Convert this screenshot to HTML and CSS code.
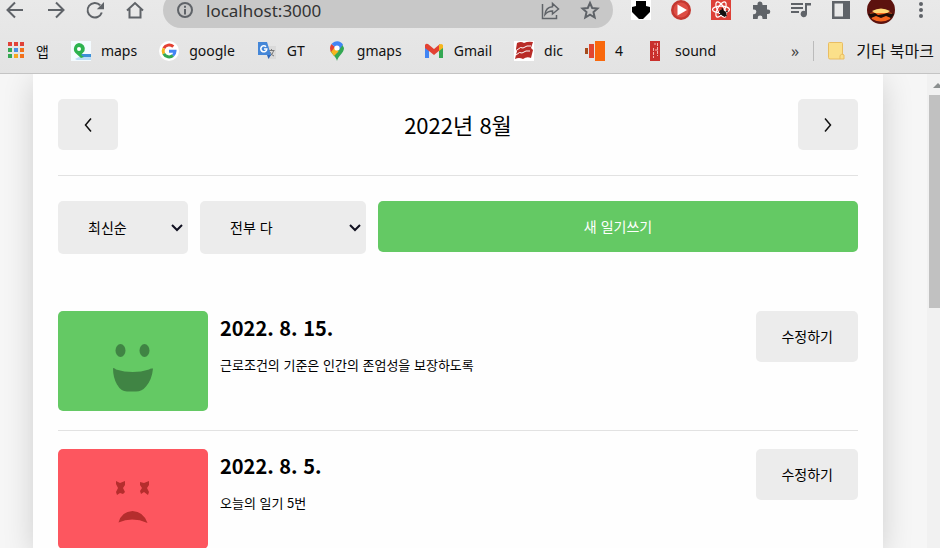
FILE: index.html
```html
<!DOCTYPE html>
<html lang="ko">
<head>
    <meta charset="utf-8">
    <title>감정 일기장</title>
    <meta name="viewport" content="width=device-width, initial-scale=1.0">
    <link rel="stylesheet" href="styles.css">
</head>
<body>
    <header class="browser">
        <div class="toolbar">
            <nav class="tools">
                <button class="tool" aria-label="뒤로"><svg class="icon line" viewBox="0 0 20 20"><path d="M18 10H3M10 2.500L2.500 10l7.500 7.500"/></svg></button>
                <button class="tool" aria-label="앞으로"><svg class="icon line" viewBox="0 0 20 20"><path d="M3 10h15M11 2.500L18.500 10 11 17.500"/></svg></button>
                <button class="tool" aria-label="새로고침"><svg class="icon" viewBox="0 0 20 20"><path class="stroke" d="M16.800 12.500A7.300 7.300 0 1 1 15.200 5.200"/><path d="M19 2v7.200h-7.200z"/></svg></button>
                <button class="tool" aria-label="홈"><svg class="icon line" viewBox="0 0 20 20"><path d="M2 10.500L10 3l8 7.500M4.500 9v8.500h11V9"/></svg></button>
            </nav>
            <div class="address">
                <svg class="icon" viewBox="0 0 20 20"><circle class="stroke" cx="10" cy="10" r="7"/><path d="M9 5.800h2v2H9zM9 9h2v5.500H9z"/></svg>
                <input class="url" type="text" value="localhost:3000" aria-label="주소">
                <div class="tools">
                    <button class="tool" aria-label="공유"><svg class="icon" viewBox="0 0 20 20"><path class="thin" d="M2.500 4v14.500h14V15M5 14.500c.5-5 3-7.500 7.500-7.800V3.500l6 5.500-6 5V11c-3.500 0-5.500 1-7.500 3.500z"/></svg></button>
                    <button class="tool" aria-label="북마크 추가"><svg class="icon" viewBox="0 0 20 20"><path class="stroke" d="M10 3l2.200 5 5.300.5-4 3.600 1.200 5.400-4.700-2.900-4.700 2.900 1.200-5.400-4-3.600L7.800 8z"/></svg></button>
                </div>
            </div>
            <div class="tools">
                <button class="tool" aria-label="다운로드"><svg class="icon" viewBox="0 0 20 20"><path fill="#fff" d="M0 0h20v20H0z"/><path fill="#000" d="M5 1h10v5l4 1v5l-7 7H8l-7-7V7l4-1z"/></svg></button>
                <button class="tool" aria-label="재생"><svg class="icon" viewBox="0 0 20 20"><circle cx="10" cy="10" r="10" fill="#c43830"/><circle cx="10" cy="10" r="7.500" fill="#dd4d44"/><path fill="#fff" d="M6.500 4.500v11L16 10z"/></svg></button>
                <button class="tool" aria-label="React 도구"><svg class="icon" viewBox="0 0 20 20"><path fill="#dd4037" d="M0 0h20v20H0z"/><g fill="none" stroke="#fff" stroke-width="1.200"><ellipse cx="10" cy="9.500" rx="8.500" ry="3.400"/><ellipse cx="10" cy="9.500" rx="8.500" ry="3.400" transform="rotate(60 10 9.500)"/><ellipse cx="10" cy="9.500" rx="8.500" ry="3.400" transform="rotate(120 10 9.500)"/></g><ellipse cx="12" cy="13" rx="2.500" ry="4" fill="#111" transform="rotate(-45 12 13)"/><path stroke="#111" d="M8 12l8 4M11 8l3 9M8 15l9-4"/></svg></button>
                <button class="tool" aria-label="확장 프로그램"><svg class="icon" viewBox="0 0 20 20"><path d="M2 5h4.500V4a2.500 2.500 0 0 1 5 0v1H16v4.500h1a2.300 2.300 0 0 1 0 4.600h-1V19h-4.500v-1a2.300 2.300 0 0 0-4.800 0v1H2v-4.800h1a2.300 2.300 0 0 0 0-4.700H2z"/></svg></button>
                <button class="tool" aria-label="미디어"><svg class="icon" viewBox="0 0 20 20"><path d="M0 3h12v2H0zM0 7h12v2H0zM0 11h8v2H0zM14 3h6v2.500h-4V14a3.200 3.200 0 1 1-2-3z"/></svg></button>
                <button class="tool" aria-label="사이드 패널"><svg class="icon" viewBox="0 0 20 20"><path fill-rule="evenodd" d="M1 1h18v18H1zM3.500 3.500v13H12v-13z"/></svg></button>
                <button class="tool" aria-label="프로필"><svg class="avatar" viewBox="0 0 28 28"><circle cx="14" cy="14" r="14" fill="#5c120e"/><path fill="#f4651f" d="M3 17q11-3 22 0l-2 6q-9 5-18 0z"/><path fill="#ffd877" d="M5 15q9-5 18 0l-3 2H8z"/><path fill="#1b0c08" d="M1 18l7-1 3 2 6-1 3-1 7 1-3 4-5-2-5 2-5-2-5 2z"/></svg></button>
                <button class="tool" aria-label="메뉴"><svg class="icon" viewBox="0 0 20 20"><circle cx="10" cy="4" r="2"/><circle cx="10" cy="10" r="2"/><circle cx="10" cy="16" r="2"/></svg></button>
            </div>
        </div>

        <nav class="bookmarks">
            <a class="bookmark" href="#">
                <svg class="icon" viewBox="0 0 20 20"><path fill="#e04238" d="M2 1h4v4H2zM8 1h4v4H8zM14 1h4v4h-4z"/><path fill="#37a853" d="M2 7h4v4H2zM2 13h4v4H2z"/><path fill="#4a90e2" d="M8 7h4v4H8z"/><path fill="#f2711c" d="M14 7h4v4h-4zM14 13h4v4h-4z"/><path fill="#f6a821" d="M8 13h4v4H8z"/></svg>
                앱
            </a>
            <a class="bookmark" href="#">
                <svg class="icon" viewBox="0 0 20 20"><path fill="#f4fbff" d="M0 0h20v20H0z"/><path fill="#3d8fd8" d="M8 13h12v3H11z"/><path fill="#b9def7" d="M4 18l4-2h12v3H6z"/><path fill="#2cb34f" d="M8 2a6 6 0 0 1 5.500 8L10 14l3 2-3 1-5.500-5A6 6 0 0 1 8 2z"/><circle cx="8" cy="8" r="2" fill="#fff"/></svg>
                maps
            </a>
            <a class="bookmark" href="#">
                <svg class="icon" viewBox="0 0 20 20"><circle cx="10" cy="10" r="10" fill="#fff"/><g fill="none" stroke-width="3"><path stroke="#e34133" d="M4.800 7.300A6 6 0 0 1 14.300 5.700"/><path stroke="#f5b51e" d="M4.800 12.700a6 6 0 0 1 0-5.400"/><path stroke="#33a852" d="M14 14.500a6 6 0 0 1-9.200-1.800"/><path stroke="#4285f4" d="M10 10.300h6a6 6 0 0 1-2 4.200"/></g></svg>
                google
            </a>
            <a class="bookmark" href="#">
                <svg class="icon" viewBox="0 0 20 20"><path fill="#dadada" d="M8 5h11v13H11z"/><path fill="none" stroke="#777" d="M11.500 9.500h6M14.500 8v1.500M16.500 10q-1 4-4 5M13 11q1 3 4 4"/><path fill="#4587d8" d="M1 1h9l4 13H1z"/><path fill="#2c67bd" d="M10 14h4l-2.500 4z"/><path fill="none" stroke="#fff" stroke-width="1.500" d="M9 5.800a3 3 0 1 0 .8 2.200H7"/></svg>
                GT
            </a>
            <a class="bookmark" href="#">
                <svg class="icon" viewBox="0 0 20 20"><path fill="#34a853" d="M3.500 10C5 14 9 15 10 20c1-5 7-8 7-13l-1.500-3z"/><path fill="#f6b51e" d="M3.500 10l4-3.500 4 4L7 15z"/><path fill="#e34133" d="M3 7q0-2 1.500-4L8 6l-4 5q-1-2-1-4z"/><path fill="#4285f4" d="M4.500 3A7 7 0 0 1 16 3.500L12 9 8 6z"/><circle cx="10" cy="7" r="2.600" fill="#fff"/></svg>
                gmaps
            </a>
            <a class="bookmark" href="#">
                <svg class="icon" viewBox="0 0 20 20"><path fill="#4285f4" d="M1 5l4 3v9H1z"/><path fill="#34a853" d="M15 8l4-3v12h-4z"/><path fill="#e34133" d="M1 4q1-2 3-1l6 5 6-5v6l-6 5-5-4-4-3z"/><path fill="#f5b51e" d="M15 4q2-2 4 0v3l-4 3z"/></svg>
                Gmail
            </a>
            <a class="bookmark" href="#">
                <svg class="icon" viewBox="0 0 20 20"><path fill="#fff" d="M0 0h20v20H0z"/><path fill="#b92b27" d="M3 2q4-2 7 0 4-2 9-1l-2 6 2 2-2 8q-4-2-8 1-4-2-8 0l2-8-1-2z"/><path fill="none" stroke="#fff" d="M3 9q4-4 6-2 4-3 8-2M2 14q4-4 6-2 4-3 8-2"/></svg>
                dic
            </a>
            <a class="bookmark" href="#">
                <svg class="icon" viewBox="0 0 20 20"><path fill="#a44c1d" d="M0 7h3v6H0z"/><path fill="#e2452f" d="M4 3h5v14H4z"/><path fill="#f9680c" d="M10 0h10v20H10z"/></svg>
                4
            </a>
            <a class="bookmark" href="#">
                <svg class="icon" viewBox="0 0 20 20"><path fill="#c9302c" d="M5 0h10v20H5z"/><path stroke="#f3b4ae" stroke-dasharray="3 1" d="M8.500 7v10M12.500 2v13M9 3h2M10 9h3"/></svg>
                sound
            </a>
            <button class="more" aria-label="북마크 더보기">»</button>
            <a class="bookmark folder" href="#">
                <svg class="icon" viewBox="0 0 20 20"><path fill="#fbe08a" stroke="#e9bd62" d="M2.500 2.500q0-1 1-1h12q1 0 1 1V13l1.500 1v4h-14q-1.500 0-1.500-1.500z"/><path fill="none" stroke="#e9bd62" d="M14 18v-3.500q2-2 3-1"/></svg>
                기타 북마크
            </a>
        </nav>
    </header>

    <div class="viewport">
        <main class="diary">
            <div class="month">
                <button class="button" aria-label="이전 달"><svg class="arrow" viewBox="0 0 10 16"><path d="M8 2.500L2.500 9 8 15.500"/></svg></button>
                <h1 class="month-title">2022년 8월</h1>
                <button class="button" aria-label="다음 달"><svg class="arrow" viewBox="0 0 10 16"><path d="M2 2.500L7.500 9 2 15.500"/></svg></button>
            </div>

            <div class="controls">
                <div class="picker">
                    <select class="select" aria-label="정렬">
                        <option>최신순</option>
                    </select>
                    <svg class="caret" viewBox="0 0 12 8"><path d="M1 1l5 5 5-5"/></svg>
                </div>
                <div class="picker wide">
                    <select class="select" aria-label="감정">
                        <option>전부 다</option>
                    </select>
                    <svg class="caret" viewBox="0 0 12 8"><path d="M1 1l5 5 5-5"/></svg>
                </div>
                <button class="button positive">새 일기쓰기</button>
            </div>

            <section class="list">
                <article class="item">
                    <svg class="emotion good" viewBox="0 0 150 100">
                        <ellipse cx="62.500" cy="39.500" rx="5" ry="6.500"/>
                        <ellipse cx="86.500" cy="39.500" rx="5" ry="6.500"/>
                        <path d="M55 57q2 0 3 1.500 17 5 33 0 1.500-1.500 4-1-1 11-7 18-4 5-10 5H69q-6 0-10-7-4-7-4-16.500z"/>
                    </svg>
                    <div class="info">
                        <h2 class="date">2022. 8. 15.</h2>
                        <p class="content">근로조건의 기준은 인간의 존엄성을 보장하도록</p>
                    </div>
                    <button class="button">수정하기</button>
                </article>

                <article class="item">
                    <svg class="emotion bad" viewBox="0 0 150 100">
                        <path d="M58 32l4 2 5-2v4l-2 3 2 4-2 2-3-1-3 2-1-3 2-4-2-4z"/>
                        <path d="M82 33l4 1 5-2v4l-2 3 2 4-1 3-4-3-3 2-1-3 2-3-2-3z"/>
                        <path d="M60.500 73.500q3-11 14-11.500 11 .5 15 12-15-6.500-29-.5z"/>
                    </svg>
                    <div class="info">
                        <h2 class="date">2022. 8. 5.</h2>
                        <p class="content">오늘의 일기 5번</p>
                    </div>
                    <button class="button">수정하기</button>
                </article>
            </section>
        </main>

        <div class="scrollbar">
            <svg class="scroll-up" viewBox="0 0 13 21"><path d="M4 14l5-5 5 5z"/></svg>
            <div class="thumb"></div>
        </div>
    </div>
</body>
</html>
```

FILE: styles.css
```css
* {
    box-sizing: border-box;
}

body {
    margin: 0;
    height: 100vh;
    display: flex;
    flex-direction: column;
    overflow: hidden;
    background-color: #f6f6f6;
    color: #000;
    font-family: "Noto Sans CJK KR", sans-serif;
    font-size: 14px;
}

button,
select,
input {
    border: none;
    font: inherit;
    color: inherit;
}

/* browser bar */
.browser {
    flex: none;
    background: linear-gradient(#e9e9e9, #e3e3e3);
    border-bottom: 1px solid #c4c4c4;
    font-family: "Noto Sans", "Noto Sans CJK KR", sans-serif;
}

.toolbar {
    display: flex;
    align-items: center;
    gap: 18px;
    height: 36px;
    margin-top: -8px;
    padding: 0 9px 0 5px;
}

.tools {
    display: flex;
    align-items: center;
    gap: 20px;
}

.tool {
    display: flex;
    justify-content: center;
    width: 20px;
    padding: 0;
    background: none;
    cursor: pointer;
}

.icon {
    flex: none;
    width: 20px;
    height: 20px;
    fill: #5f6368;
}

.line,
.stroke,
.thin {
    fill: none;
    stroke: #5f6368;
    stroke-width: 2;
}

.thin {
    stroke-width: 1.5;
}

.avatar {
    flex: none;
    width: 28px;
    height: 28px;
}

.address {
    flex: 1;
    display: flex;
    align-items: center;
    gap: 11px;
    height: 36px;
    padding: 0 13px 0 12px;
    border-radius: 18px;
    background-color: #c8c8c8;
}

.url {
    flex: 1;
    min-width: 0;
    padding: 0;
    background: none;
    color: #333;
    font-size: 17px;
}

.bookmarks {
    display: flex;
    align-items: center;
    gap: 22px;
    height: 45px;
    padding: 0 6px;
}

.bookmark {
    display: flex;
    align-items: center;
    gap: 10px;
    color: #111;
    text-decoration: none;
    white-space: nowrap;
}

.more {
    margin-left: auto;
    padding: 0;
    background: none;
    color: #444;
    font-size: 16px;
}

.folder {
    margin-left: -8px;
    padding-left: 12px;
    border-left: 1px solid #bbb;
    font-size: 16px;
    line-height: 20px;
}

/* page */
.viewport {
    flex: 1;
    min-height: 0;
    display: flex;
    overflow: hidden;
    padding-left: 33px;
}

.diary {
    flex: 1;
    margin-right: 44px;
    padding: 25px;
    background-color: #fefefe;
    box-shadow: 0 7px 29px rgba(0, 0, 0, 0.16);
}

.button {
    flex: none;
    min-width: 60px;
    height: 51px;
    padding: 0 25px 2px;
    border-radius: 5px;
    background-color: #ececec;
    cursor: pointer;
}

.month {
    display: flex;
    align-items: center;
    justify-content: space-between;
    padding-bottom: 25px;
    border-bottom: 1px solid #e2e2e2;
}

.month-title {
    margin: 0;
    font-size: 22px;
    font-weight: 400;
    line-height: 51px;
}

.arrow {
    display: block;
    width: 10px;
    height: 16px;
    fill: none;
    stroke: #111;
    stroke-width: 1.5;
}

.controls {
    display: flex;
    align-items: flex-start;
    gap: 12px;
    margin-top: 25px;
}

.picker {
    position: relative;
    width: 130px;
    height: 53px;
}

.wide {
    width: 166px;
}

.select {
    appearance: none;
    width: 100%;
    height: 100%;
    padding: 0 30px 2px;
    border-radius: 5px;
    background-color: #ececec;
    cursor: pointer;
}

.caret {
    position: absolute;
    top: 23px;
    right: 5px;
    width: 12px;
    height: 8px;
    fill: none;
    stroke: #101020;
    stroke-width: 2;
    pointer-events: none;
}

.positive {
    flex: 1;
    background-color: #64c964;
    color: #fff;
}

.list {
    margin-top: 39px;
}

.item {
    display: flex;
    align-items: flex-start;
    gap: 12px;
    padding: 18px 0 19px;
    border-bottom: 1px solid #e2e2e2;
}

.emotion {
    flex: none;
    width: 150px;
    height: 100px;
    border-radius: 5px;
}

.good {
    background-color: #64c964;
    fill: #408444;
}

.bad {
    background-color: #fd565f;
    fill: #b52d2d;
}

.info {
    flex: 1;
}

.date {
    margin: 0 0 8px;
    font-size: 20px;
    line-height: 34px;
}

.content {
    margin: 0;
    font-size: 13px;
    line-height: 24px;
}

/* scrollbar */
.scrollbar {
    flex: none;
    width: 13px;
    padding-left: 2px;
    background-color: #f1f1f1;
}

.scroll-up {
    display: block;
    width: 13px;
    height: 21px;
    fill: #8b8f8f;
}

.thumb {
    height: 45%;
    background-color: #c1c1c1;
}
```
